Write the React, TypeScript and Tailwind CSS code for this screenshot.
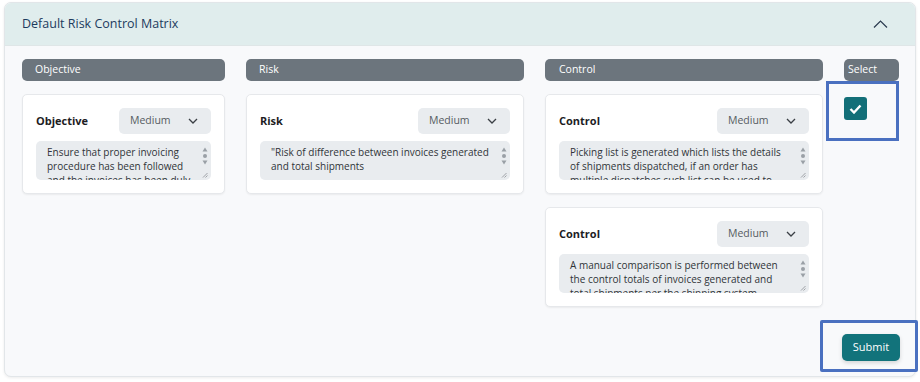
import React from "react";

type CardProps = {
  label: string;
  lines: string[];
};

function Grip() {
  return (
    <div className="absolute right-[3px] top-[5px] bottom-[2px] flex w-[6px] flex-col items-center">
      <svg width="6" height="5" viewBox="0 0 6 5" className="mt-[1px]">
        <path d="M3 0.5 L5.5 4.5 L0.5 4.5 Z" fill="#9aa0a6" />
      </svg>
      <div className="mt-[2px] h-[4px] w-[4px] rounded-full bg-[#9aa0a6]" />
      <svg width="6" height="5" viewBox="0 0 6 5" className="mt-[2px]">
        <path d="M0.5 0.5 L5.5 0.5 L3 4.5 Z" fill="#9aa0a6" />
      </svg>
      <svg width="6" height="6" viewBox="0 0 6 6" className="mt-auto">
        <path d="M5.5 1 L1 5.5 M5.5 3.5 L3.5 5.5" stroke="#8a8f94" strokeWidth="0.8" />
      </svg>
    </div>
  );
}

function RiskCard({ label, lines }: CardProps) {
  return (
    <div className="rounded-[5px] border border-[#e6e8eb] bg-white px-[13px] pb-[13px] pt-[13px] shadow-[0_1px_2px_rgba(0,0,0,0.06)]">
      <div className="flex items-center justify-between">
        <span className="text-[11px] font-bold text-[#1d1d1f]">{label}</span>
        <div className="flex h-[26px] w-[92px] items-center justify-between rounded-[5px] bg-[#e9ecef] pl-[11px] pr-[13px]">
          <span className="text-[10.5px] text-[#555b61]">Medium</span>
          <svg width="10" height="6" viewBox="0 0 10 6">
            <path d="M1 1 L5 5 L9 1" fill="none" stroke="#3a3f44" strokeWidth="1.3" />
          </svg>
        </div>
      </div>
      <div className="relative mt-[7px] h-[39px] overflow-hidden rounded-[5px] bg-[#e9ecef] pl-[11px] pr-[14px] pt-[4px]">
        {lines.map((line, i) => (
          <div key={i} className="whitespace-nowrap text-[10px] leading-[14px] text-[#303438]">
            {line}
          </div>
        ))}
        <Grip />
      </div>
    </div>
  );
}

export default function App() {
  return (
    <div
      className="relative h-[382px] w-[920px] bg-white pl-[4px] pr-[4px] pt-[2px]"
      style={{ fontFamily: '"Open Sans", "Noto Sans", sans-serif' }}
    >
      <div className="h-[375px] w-[912px] overflow-hidden rounded-[7px] border border-[#e2e6e9] bg-[#f8f9fb] shadow-[0_1px_3px_rgba(0,0,0,0.08)]">
        <div className="flex h-[43px] items-center justify-between border-b border-[#dfe6e7] bg-[#e0eded] pl-[17px] pr-[27px]">
          <span className="text-[12.5px] font-medium text-[#1d3b5e]">Default Risk Control Matrix</span>
          <svg width="15" height="8" viewBox="0 0 15 8">
            <path d="M1 7.5 L7.5 1 L14 7.5" fill="none" stroke="#2a3a4f" strokeWidth="1.2" />
          </svg>
        </div>

        <div className="pl-[17px] pr-[15px] pt-[13px]">
          <div className="grid grid-cols-[203px_278px_278px_55px] gap-x-[21px]">
            <div className="flex h-[22px] items-center rounded-[5px] bg-[#6c757d] pl-[13px] text-[10.5px] text-white">Objective</div>
            <div className="flex h-[22px] items-center rounded-[5px] bg-[#6c757d] pl-[13px] text-[10.5px] text-white">Risk</div>
            <div className="flex h-[22px] items-center rounded-[5px] bg-[#6c757d] pl-[14px] text-[10.5px] text-white">Control</div>
            <div className="flex h-[22px] items-center rounded-[5px] bg-[#6c757d] pl-[4px] text-[10.5px] text-white">Select</div>

            <div className="mt-[13px]">
              <RiskCard
                label="Objective"
                lines={[
                  "Ensure that proper invoicing",
                  "procedure has been followed",
                  "and the invoices has been duly",
                ]}
              />
            </div>
            <div className="mt-[13px]">
              <RiskCard
                label="Risk"
                lines={['"Risk of difference between invoices generated', "and total shipments"]}
              />
            </div>
            <div className="mt-[13px] flex flex-col gap-[13px]">
              <RiskCard
                label="Control"
                lines={[
                  "Picking list is generated which lists the details",
                  "of shipments dispatched, if an order has",
                  "multiple dispatches such list can be used to",
                ]}
              />
              <RiskCard
                label="Control"
                lines={[
                  "A manual comparison is performed between",
                  "the control totals of invoices generated and",
                  "total shipments per the shipping system",
                ]}
              />
            </div>
            <div className="mt-[16px]">
              <div className="flex h-[23px] w-[23px] items-center justify-center rounded-[3px] bg-[#136f78]">
                <svg width="13" height="10" viewBox="0 0 13 10">
                  <path d="M1.5 5 L5 8.5 L11.5 1.5" fill="none" stroke="white" strokeWidth="2.4" />
                </svg>
              </div>
            </div>
          </div>

          <div className="mt-[27px] flex justify-end">
            <button className="h-[27px] w-[58px] rounded-[5px] bg-[#12737b] text-[11px] text-white shadow-[0_2px_4px_rgba(0,0,0,0.15)]">
              Submit
            </button>
          </div>
        </div>
      </div>

      <div className="pointer-events-none absolute left-[826px] top-[81px] h-[60px] w-[73px] border-[3px] border-[#4a70c0]" />
      <div className="pointer-events-none absolute left-[820px] top-[320px] h-[52px] w-[98px] rounded-[2px] border-[3px] border-[#4a70c0]" />
    </div>
  );
}
